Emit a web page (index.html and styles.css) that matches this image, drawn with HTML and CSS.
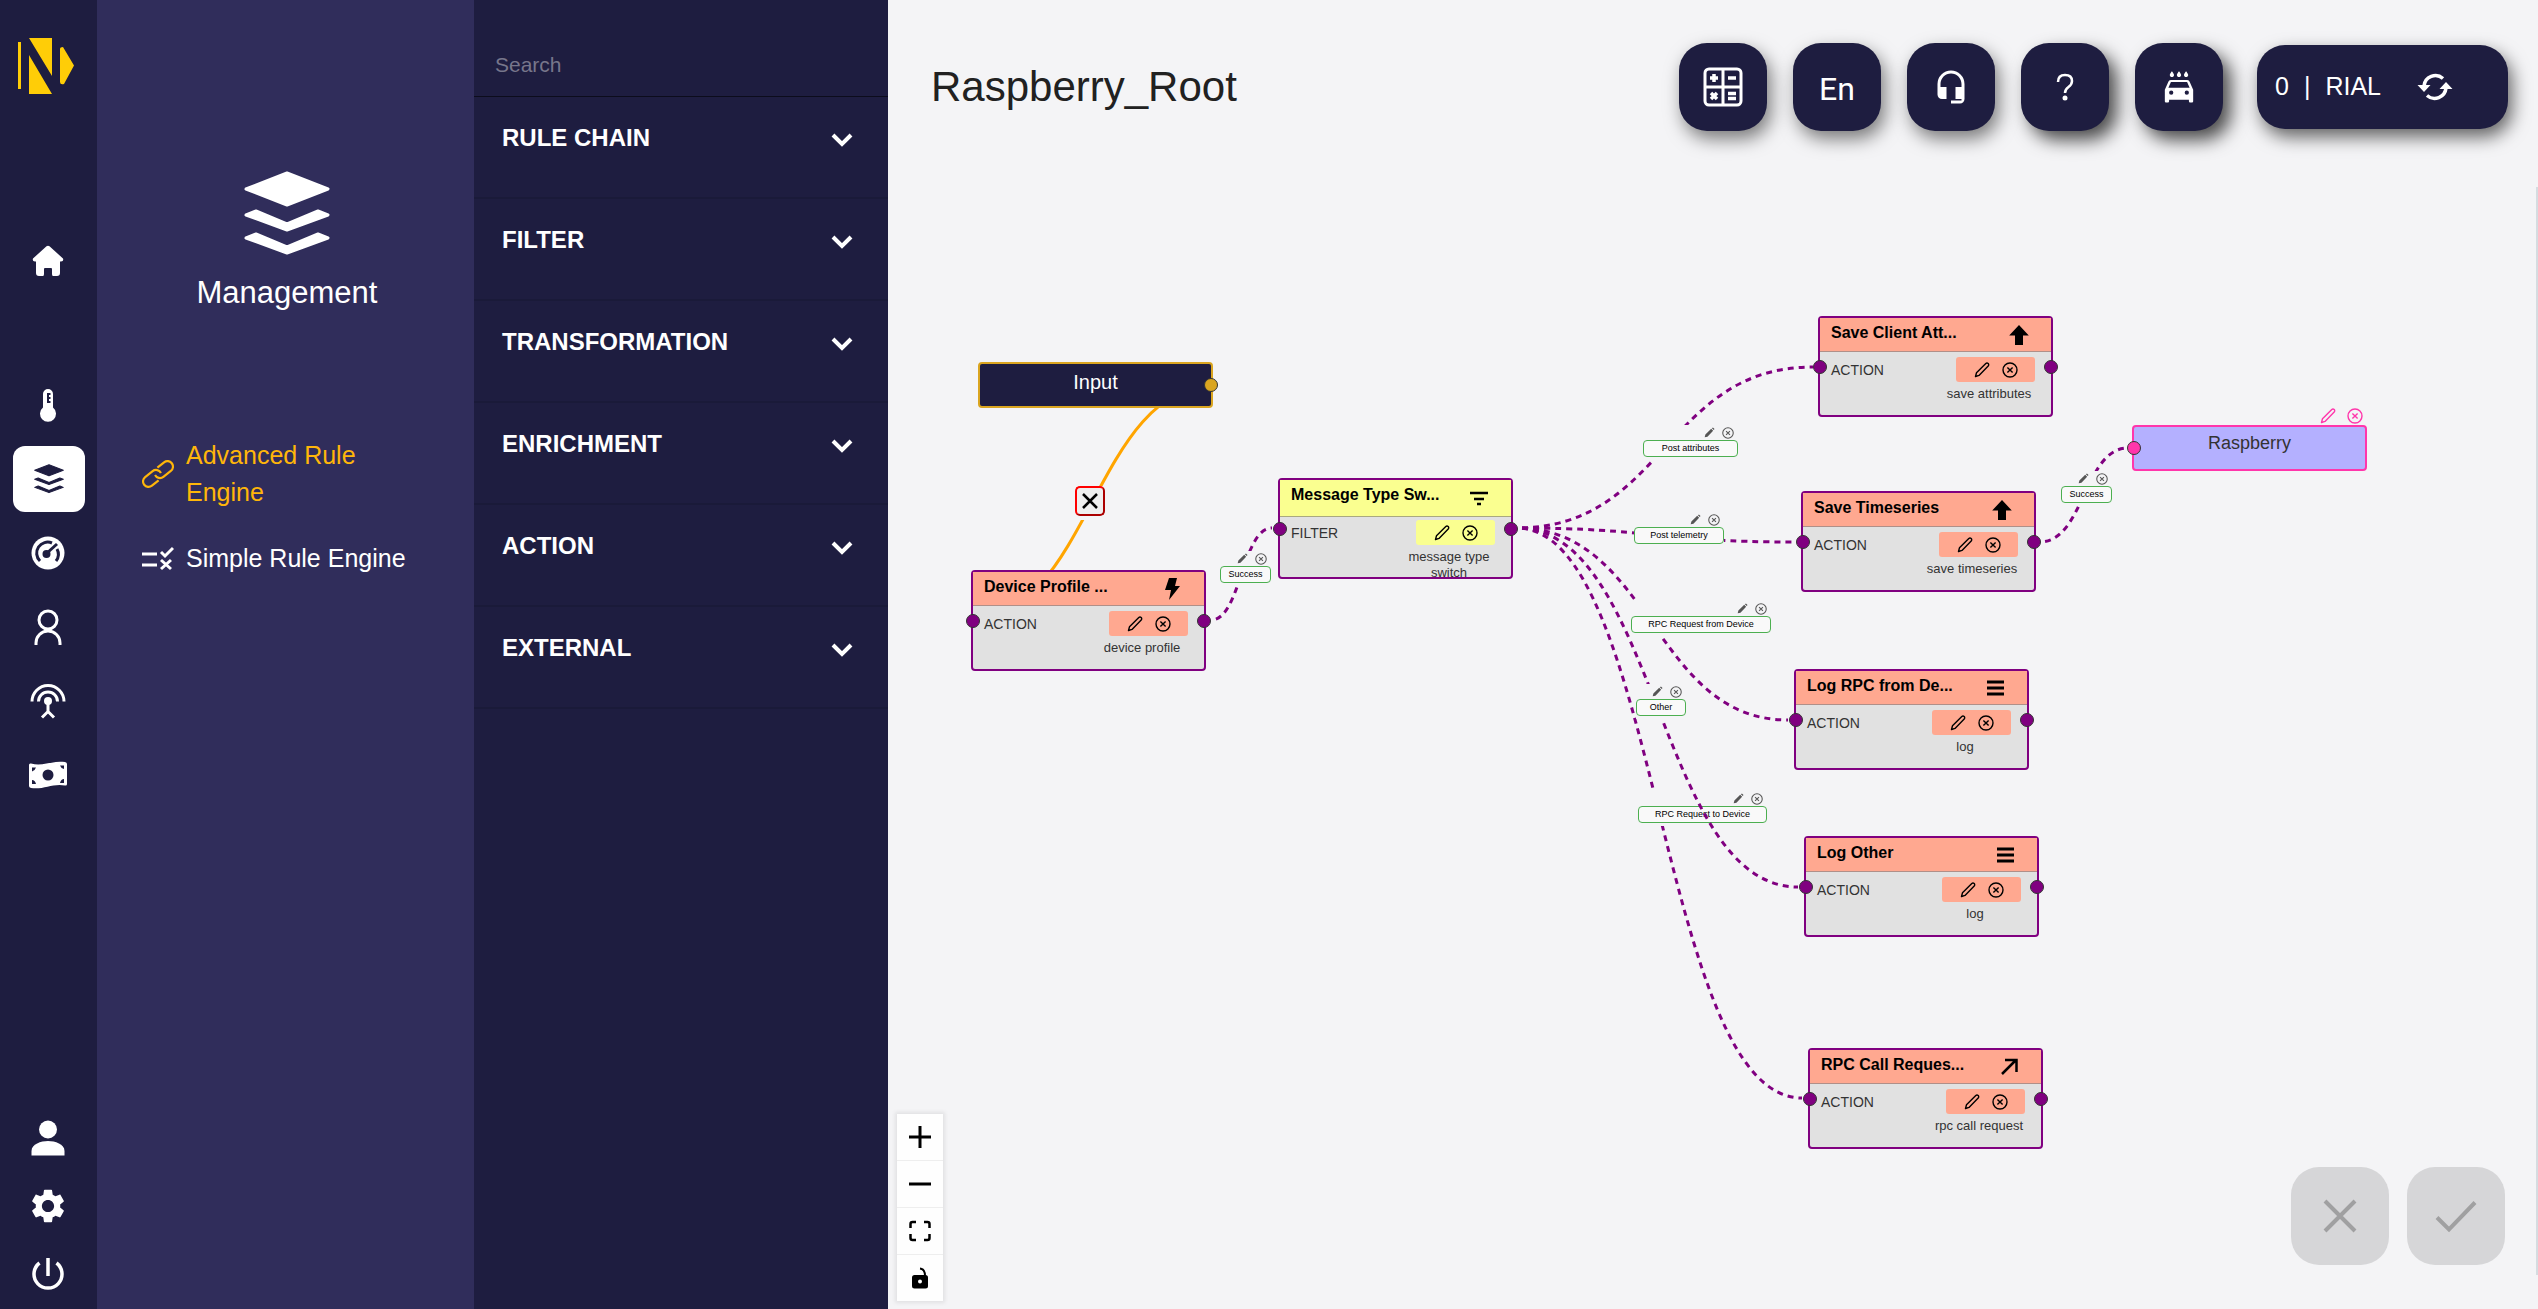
FILE: index.html
```html
<!DOCTYPE html>
<html lang="en">
<head>
<meta charset="utf-8">
<title>Raspberry_Root</title>
<link rel="stylesheet" href="styles.css">
</head>
<body>
<svg class="sprite" aria-hidden="true">
  <symbol id="layers" viewBox="0 0 86 86"><g fill="currentColor" stroke="currentColor" stroke-width="3" stroke-linejoin="round"><path d="M43 2 84 18 43 34 2 18z"/><path d="M2 36 12 32 43 45 74 32 84 36 43 51z" transform="translate(0 8)"/><path d="M2 36 12 32 43 45 74 32 84 36 43 51z" transform="translate(0 31)"/></g></symbol>
  <symbol id="pencil" viewBox="0 0 16 16"><path d="M1.500 14.500 2.500 10.800 11.800 1.600a1.500 1.500 0 0 1 2.400 2.400L5 13.400z" fill="none" stroke="currentColor" stroke-width="1.400" stroke-linejoin="round"/></symbol>
  <symbol id="pencil-solid" viewBox="0 0 16 16"><path d="M1 15 2 11 10.500 2.700 13.300 5.500 5 14zM11.500 1.800 13 .7 15.300 3 14.200 4.500z" fill="currentColor"/></symbol>
  <symbol id="remove" viewBox="0 0 16 16"><g fill="none" stroke="currentColor" stroke-width="1.400"><circle cx="8" cy="8" r="7"/><path d="M5.400 5.400l5.200 5.200M10.600 5.400l-5.200 5.200"/></g></symbol>
  <symbol id="arrow-up" viewBox="0 0 20 22"><path d="M10 1 19.800 11.500H14V21H6v-9.500H.2z" fill="currentColor"/></symbol>
  <symbol id="menu" viewBox="0 0 20 22"><path d="M2 5h17M2 11h17M2 17h17" stroke="currentColor" stroke-width="3"/></symbol>
  <symbol id="chevron" viewBox="0 0 22 14"><path d="M2 2l9 9 9-9" fill="none" stroke="currentColor" stroke-width="4"/></symbol>
</svg>

<nav class="rail" aria-label="Main">
  <a class="logo" href="#" aria-label="Home page"><svg viewBox="0 0 56 56" width="56" height="56" fill="#ffcd07"><path d="M0 4h3v47H0zM11 0h23v38zM11 17l23 39H11zM42 11q0-2 3-2l11 18.500L46 46q-4 1-4-2z"/></svg></a>
  <a class="rail-item" href="#" aria-label="Home"><svg viewBox="0 0 32 32" width="32" height="32" fill="currentColor"><path d="M14.500 1.300q1.500-1 3 0L31 13.500q1 3-2 3h-1V28q0 3-3 3h-4q-1 0-1-2v-5q0-1-1-1h-6q-1 0-1 1v5q0 2-1 2H7q-3 0-3-3V16.500H3q-3 0-2-3z"/></svg></a>
  <div class="rail-group">
    <a class="rail-item" href="#" aria-label="Sensors"><svg viewBox="0 0 18 34" width="18" height="34"><path d="M9 1a5 5 0 0 0-5 5v13.500a8 8 0 1 0 10 0V6a5 5 0 0 0-5-5z" fill="currentColor"/><path d="M9 5v10M9 6h2.500M9 10h2.500M9 14h2.500" stroke="#1e1d40" stroke-width="2"/></svg></a>
    <a class="rail-item active" href="#" aria-label="Management"><svg width="30" height="30"><use href="#layers"/></svg></a>
    <a class="rail-item" href="#" aria-label="Dashboard"><svg viewBox="0 0 34 34" width="34" height="34" fill="none"><circle cx="17" cy="17" r="16.500" fill="currentColor"/><path d="M9 25a11 11 0 0 1 12-18M26 13a11 11 0 0 1-1 12" stroke="#1e1d40" stroke-width="3"/><path d="M26 8 16 17" stroke="#1e1d40" stroke-width="3"/><circle cx="15.500" cy="18" r="4" fill="#1e1d40"/></svg></a>
    <a class="rail-item" href="#" aria-label="Customers"><svg viewBox="0 0 28 36" width="28" height="36" fill="none" stroke="currentColor" stroke-width="3"><circle cx="14" cy="11" r="9"/><path d="M2 36V34a12 12 0 0 1 24 0v2"/></svg></a>
    <a class="rail-item" href="#" aria-label="Gateways"><svg viewBox="0 0 36 36" width="36" height="36" fill="none" stroke="currentColor" stroke-width="3"><path d="M2 18.500a16 16 0 0 1 32 0M8.500 18.500a9.500 9.500 0 0 1 19 0"/><circle cx="18" cy="18" r="4" fill="currentColor" stroke="none"/><path d="M18 18v11M12 34.500l6-6 6 6"/></svg></a>
    <a class="rail-item" href="#" aria-label="Billing"><svg viewBox="0 0 40 28" width="40" height="28"><path d="M1 4q0-2 2-1.500C15 6 24-1 37 1q2 .5 2 2v20q0 2-2 1.500C25 22 15 29 3 27q-2-.5-2-2z" fill="currentColor"/><g fill="#1e1d40"><circle cx="20" cy="14" r="5.500"/><path d="M4 6.500h4q-1 3-4 4zM4 23v-4q3 0 4 4zM36 4.500h-4q1 3 4 3.500zM36 22v-4q-3 0-4 4z"/></g></svg></a>
  </div>
  <div class="rail-foot">
    <a class="rail-item" href="#" aria-label="Profile"><svg viewBox="0 0 34 36" width="34" height="36" fill="currentColor"><circle cx="17" cy="9.500" r="9"/><path d="M.5 35.500V31C.5 24 10 21 17 21s16.500 3 16.500 10v4.500z"/></svg></a>
    <a class="rail-item" href="#" aria-label="Settings"><svg viewBox="2 2 20 20" width="34" height="34" fill="currentColor"><path d="M19.140 12.940c.04-.3.06-.61.06-.94 0-.32-.02-.64-.07-.94l2.030-1.580c.18-.14.23-.41.12-.61l-1.920-3.320c-.12-.22-.37-.29-.59-.22l-2.390.96c-.5-.38-1.030-.7-1.620-.94l-.36-2.540c-.04-.24-.24-.41-.48-.41h-3.840c-.24 0-.43.17-.47.41l-.36 2.540c-.59.24-1.130.57-1.620.94l-2.390-.96c-.22-.08-.47 0-.59.22L2.740 8.870c-.12.21-.08.47.12.61l2.030 1.580c-.05.3-.09.63-.09.94s.02.64.07.94l-2.030 1.580c-.18.14-.23.41-.12.61l1.920 3.320c.12.22.37.29.59.22l2.390-.96c.5.38 1.030.7 1.620.94l.36 2.540c.05.24.24.41.48.41h3.840c.24 0 .44-.17.47-.41l.36-2.540c.59-.24 1.130-.56 1.620-.94l2.390.96c.22.08.47 0 .59-.22l1.920-3.320c.12-.22.07-.47-.12-.61l-2.010-1.580zM12 15.600c-1.980 0-3.600-1.620-3.600-3.600s1.620-3.600 3.600-3.600 3.600 1.620 3.600 3.600-1.620 3.600-3.600 3.600z"/></svg></a>
    <a class="rail-item" href="#" aria-label="Log out"><svg viewBox="0 0 32 34" width="32" height="34" fill="none" stroke="currentColor" stroke-width="3.500"><path d="M16 1v18M7.500 6a14 14 0 1 0 17 0"/></svg></a>
  </div>
</nav>

<aside class="section-menu">
  <svg width="86" height="86"><use href="#layers"/></svg>
  <h2>Management</h2>
  <nav class="section-links" aria-label="Management">
    <a class="current" href="#"><svg viewBox="0 0 32 32" width="32" height="32" fill="none" stroke="currentColor" stroke-width="2.200"><g transform="rotate(-38 16 16)"><path d="M12.500 21.500H4a5.500 5.500 0 0 1 0-11h9.500a5.500 5.500 0 0 1 5.500 6.500"/><path d="M19.500 10.500H28a5.500 5.500 0 0 1 0 11h-9.500a5.500 5.500 0 0 1-5.500-6.500"/></g></svg><span>Advanced Rule Engine</span></a>
    <a href="#"><svg viewBox="0 0 32 32" width="32" height="32" fill="none" stroke="currentColor" stroke-width="3"><path d="M0 11h15M0 22h15M19 9l4 4 8-8M19 17l10 9M29 17l-10 9"/></svg><span>Simple Rule Engine</span></a>
  </nav>
</aside>

<aside class="palette">
  <input class="search" type="search" placeholder="Search" aria-label="Search">
  <button type="button">RULE CHAIN<svg width="22" height="14"><use href="#chevron"/></svg></button>
  <button type="button">FILTER<svg width="22" height="14"><use href="#chevron"/></svg></button>
  <button type="button">TRANSFORMATION<svg width="22" height="14"><use href="#chevron"/></svg></button>
  <button type="button">ENRICHMENT<svg width="22" height="14"><use href="#chevron"/></svg></button>
  <button type="button">ACTION<svg width="22" height="14"><use href="#chevron"/></svg></button>
  <button type="button">EXTERNAL<svg width="22" height="14"><use href="#chevron"/></svg></button>
</aside>

<main class="workspace">
  <header class="topbar">
    <h1>Raspberry_Root</h1>
    <button class="tile" type="button" aria-label="Calculator"><svg viewBox="0 0 40 40" width="40" height="40" fill="none" stroke="currentColor" stroke-width="3"><rect x="2" y="2" width="36" height="36" rx="4"/><path d="M20 2v36M2 20h36"/><path d="M11 7v8M7 11h8M25 11h8M25 26.500h8M25 31.500h8M8 26l6 6M14 26l-6 6" stroke-width="3.500"/></svg></button>
    <button class="tile lang" type="button">En</button>
    <button class="tile" type="button" aria-label="Support"><svg viewBox="0 0 24 24" width="36" height="36" fill="currentColor"><path d="M12 1a9 9 0 0 0-9 9v7c0 1.660 1.340 3 3 3h3v-8H5v-2c0-3.870 3.130-7 7-7s7 3.130 7 7v2h-4v8h4v1h-7v2h6c1.660 0 3-1.340 3-3V10a9 9 0 0 0-9-9z"/></svg></button>
    <button class="tile strong" type="button" aria-label="Help"><svg viewBox="0 0 18 28" width="18" height="28" fill="none" stroke="currentColor" stroke-width="2.500"><path d="M2 9Q2 2 9 2t7 6q0 3.500-3.500 6T9 20"/><circle cx="9" cy="25" r="2.500" fill="currentColor" stroke="none"/></svg></button>
    <button class="tile strong" type="button" aria-label="Car wash"><svg viewBox="0 0 24 24" width="34" height="34" fill="currentColor"><path d="M17 5c.83 0 1.500-.67 1.500-1.500 0-1-1.500-2.700-1.500-2.700s-1.500 1.700-1.500 2.700c0 .83.67 1.500 1.500 1.500zm-5 0c.83 0 1.500-.67 1.500-1.500 0-1-1.500-2.700-1.500-2.700s-1.500 1.700-1.500 2.700c0 .83.67 1.500 1.500 1.500zM7 5c.83 0 1.500-.67 1.500-1.500C8.500 2.500 7 .8 7 .8S5.500 2.500 5.500 3.500C5.500 4.330 6.170 5 7 5z"/><path d="M19.500 8.300C19.300 7.600 18.600 7 17.800 7H6.200c-.8 0-1.500.6-1.700 1.300L2 14v8c0 .55.45 1 1 1h1c.55 0 1-.45 1-1v-1h14v1c0 .55.45 1 1 1h1c.55 0 1-.45 1-1v-8zM6.500 17.500a1.500 1.500 0 1 1 0-3 1.500 1.500 0 0 1 0 3zm11 0a1.500 1.500 0 1 1 0-3 1.500 1.500 0 0 1 0 3zM4.500 12.500l1.800-4h11.400l1.800 4z"/></svg></button>
    <div class="balance"><span>0</span><span>|</span><span>RIAL</span><button type="button" aria-label="Refresh balance"><svg viewBox="0 0 36 28" width="36" height="28" fill="none" stroke="currentColor" stroke-width="3.500"><path d="M26 5.500A11.500 11.500 0 0 0 7 13M10 22.500A11.500 11.500 0 0 0 29 15"/><path d="M.5 12h13L7 19zM22.500 16h13L29 9z" fill="currentColor" stroke="none"/></svg></button></div>
  </header>

  <section class="canvas" aria-label="Rule chain diagram">
    <svg class="edges">
      <path class="edge-root" d="M329 235C204 235 204 470 79 470"/>
      <foreignObject x="187" y="336" width="30" height="34"><div class="cut"><button type="button" aria-label="Remove link"><svg viewBox="0 0 18 18" width="18" height="18"><path d="M2 2l14 14M16 2 2 16" stroke="#000" stroke-width="2.500"/></svg></button></div></foreignObject>

      <path class="edge" d="M323 470C353 470 354 378 384 378"/>
      <foreignObject x="332" y="401" width="51" height="35"><div class="label"><span class="tools"><svg width="11" height="11"><use href="#pencil-solid"/></svg><svg width="12" height="12"><use href="#remove"/></svg></span><span class="text">Success</span></div></foreignObject>

      <path class="edge" d="M629 378C777 378 777 217 925 217"/>
      <foreignObject x="755" y="275" width="95" height="35"><div class="label"><span class="tools"><svg width="11" height="11"><use href="#pencil-solid"/></svg><svg width="12" height="12"><use href="#remove"/></svg></span><span class="text">Post attributes</span></div></foreignObject>

      <path class="edge" d="M629 378C768 378 768 392 907 392"/>
      <foreignObject x="746" y="362" width="90" height="35"><div class="label"><span class="tools"><svg width="11" height="11"><use href="#pencil-solid"/></svg><svg width="12" height="12"><use href="#remove"/></svg></span><span class="text">Post telemetry</span></div></foreignObject>

      <path class="edge" d="M629 378C764 378 765 570 900 570"/>
      <foreignObject x="743" y="451" width="140" height="35"><div class="label"><span class="tools"><svg width="11" height="11"><use href="#pencil-solid"/></svg><svg width="12" height="12"><use href="#remove"/></svg></span><span class="text">RPC Request from Device</span></div></foreignObject>

      <path class="edge" d="M629 378C771 378 771 948 914 948"/>
      <foreignObject x="750" y="641" width="129" height="35"><div class="label"><span class="tools"><svg width="11" height="11"><use href="#pencil-solid"/></svg><svg width="12" height="12"><use href="#remove"/></svg></span><span class="text">RPC Request to Device</span></div></foreignObject>

      <path class="edge" d="M629 378C769 378 770 737 910 737"/>
      <foreignObject x="748" y="534" width="50" height="35"><div class="label"><span class="tools"><svg width="11" height="11"><use href="#pencil-solid"/></svg><svg width="12" height="12"><use href="#remove"/></svg></span><span class="text">Other</span></div></foreignObject>

      <path class="edge" d="M1152 392C1196 392 1196 298 1240 298"/>
      <foreignObject x="1173" y="321" width="51" height="35"><div class="label"><span class="tools"><svg width="11" height="11"><use href="#pencil-solid"/></svg><svg width="12" height="12"><use href="#remove"/></svg></span><span class="text">Success</span></div></foreignObject>
    </svg>

    <div class="node plain input" style="left:90px;top:212px">Input<i class="port out"></i></div>

    <article class="node" style="left:83px;top:420px">
      <h3><span>Device Profile ...</span><svg viewBox="0 0 20 22" width="20" height="22"><path d="M7 0h8l-2 8h5L7 22l2-10H3z"/></svg></h3>
      <div class="node-body"><span class="kind">ACTION</span><div class="detail"><div class="pill"><button type="button" aria-label="Edit"><svg width="16" height="16"><use href="#pencil"/></svg></button><button type="button" aria-label="Remove"><svg width="16" height="16"><use href="#remove"/></svg></button></div><p>device profile</p></div></div>
      <i class="port in"></i><i class="port out"></i>
    </article>

    <article class="node filter" style="left:390px;top:328px">
      <h3><span>Message Type Sw...</span><svg viewBox="0 0 20 22" width="20" height="22" stroke="#000" stroke-width="2.500"><path d="M1 6h18M5 12h10M8 17h4"/></svg></h3>
      <div class="node-body"><span class="kind">FILTER</span><div class="detail"><div class="pill"><button type="button" aria-label="Edit"><svg width="16" height="16"><use href="#pencil"/></svg></button><button type="button" aria-label="Remove"><svg width="16" height="16"><use href="#remove"/></svg></button></div><p>message type switch</p></div></div>
      <i class="port in"></i><i class="port out"></i>
    </article>

    <article class="node" style="left:930px;top:166px">
      <h3><span>Save Client Att...</span><svg width="20" height="22"><use href="#arrow-up"/></svg></h3>
      <div class="node-body"><span class="kind">ACTION</span><div class="detail"><div class="pill"><button type="button" aria-label="Edit"><svg width="16" height="16"><use href="#pencil"/></svg></button><button type="button" aria-label="Remove"><svg width="16" height="16"><use href="#remove"/></svg></button></div><p>save attributes</p></div></div>
      <i class="port in"></i><i class="port out"></i>
    </article>

    <article class="node" style="left:913px;top:341px">
      <h3><span>Save Timeseries</span><svg width="20" height="22"><use href="#arrow-up"/></svg></h3>
      <div class="node-body"><span class="kind">ACTION</span><div class="detail"><div class="pill"><button type="button" aria-label="Edit"><svg width="16" height="16"><use href="#pencil"/></svg></button><button type="button" aria-label="Remove"><svg width="16" height="16"><use href="#remove"/></svg></button></div><p>save timeseries</p></div></div>
      <i class="port in"></i><i class="port out"></i>
    </article>

    <article class="node" style="left:906px;top:519px">
      <h3><span>Log RPC from De...</span><svg width="20" height="22"><use href="#menu"/></svg></h3>
      <div class="node-body"><span class="kind">ACTION</span><div class="detail"><div class="pill"><button type="button" aria-label="Edit"><svg width="16" height="16"><use href="#pencil"/></svg></button><button type="button" aria-label="Remove"><svg width="16" height="16"><use href="#remove"/></svg></button></div><p>log</p></div></div>
      <i class="port in"></i><i class="port out"></i>
    </article>

    <article class="node" style="left:916px;top:686px">
      <h3><span>Log Other</span><svg width="20" height="22"><use href="#menu"/></svg></h3>
      <div class="node-body"><span class="kind">ACTION</span><div class="detail"><div class="pill"><button type="button" aria-label="Edit"><svg width="16" height="16"><use href="#pencil"/></svg></button><button type="button" aria-label="Remove"><svg width="16" height="16"><use href="#remove"/></svg></button></div><p>log</p></div></div>
      <i class="port in"></i><i class="port out"></i>
    </article>

    <article class="node" style="left:920px;top:898px">
      <h3><span>RPC Call Reques...</span><svg viewBox="0 0 20 22" width="20" height="22" fill="none" stroke="#000" stroke-width="2.500"><path d="M3 18 17 4M6 4h11.500v12"/></svg></h3>
      <div class="node-body"><span class="kind">ACTION</span><div class="detail"><div class="pill"><button type="button" aria-label="Edit"><svg width="16" height="16"><use href="#pencil"/></svg></button><button type="button" aria-label="Remove"><svg width="16" height="16"><use href="#remove"/></svg></button></div><p>rpc call request</p></div></div>
      <i class="port in"></i><i class="port out"></i>
    </article>

    <div class="node plain chain" style="left:1244px;top:275px">Raspberry<i class="port in"></i>
      <div class="chain-tools"><button type="button" aria-label="Edit"><svg width="16" height="16"><use href="#pencil"/></svg></button><button type="button" aria-label="Remove"><svg width="16" height="16"><use href="#remove"/></svg></button></div>
    </div>

    <div class="zoom-controls">
      <button type="button" aria-label="Zoom in"><svg viewBox="0 0 22 22" width="22" height="22" stroke="#000" stroke-width="3"><path d="M11 0v22M0 11h22"/></svg></button>
      <button type="button" aria-label="Zoom out"><svg viewBox="0 0 22 22" width="22" height="22" stroke="#000" stroke-width="3"><path d="M0 11h22"/></svg></button>
      <button type="button" aria-label="Fit view"><svg viewBox="0 0 22 22" width="22" height="22" fill="none" stroke="#000" stroke-width="2.500"><path d="M1.500 8V4q0-2 2-2H7M15 2h3.500q2 0 2 2v4M20.500 14v4q0 2-2 2H15M7 20H3.500q-2 0-2-2v-4"/></svg></button>
      <button type="button" aria-label="Toggle interactivity"><svg viewBox="0 0 18 22" width="18" height="22"><rect x="1" y="8" width="16" height="13.500" rx="2.500"/><path d="M9 1.500q5 .5 5 7.500" fill="none" stroke="#000" stroke-width="2"/><circle cx="9" cy="14.500" r="2" fill="#fff"/></svg></button>
    </div>

    <div class="confirm">
      <button type="button" disabled aria-label="Cancel"><svg viewBox="0 0 34 34" width="34" height="34"><path d="M2 2l30 30M32 2 2 32" stroke="currentColor" stroke-width="4"/></svg></button>
      <button type="button" disabled aria-label="Apply"><svg viewBox="0 0 42 34" width="42" height="34" fill="none"><path d="M2 18.500l12 12L40 3.500" stroke="currentColor" stroke-width="4"/></svg></button>
    </div>
    <div class="drawer-edge"></div>
  </section>
</main>
</body>
</html>
```
FILE: styles.css
```css
:root {
  --navy: #1e1d40;
  --indigo: #302d5b;
  --page: #f4f4f6;
  --purple: #800080;
  --salmon: #ffa890;
}

* { box-sizing: border-box; }

body {
  margin: 0;
  min-height: 100vh;
  display: flex;
  background: var(--page);
  font-family: "Liberation Sans", Arial, sans-serif;
  color: #212121;
}

h1, h2, h3, p { margin: 0; font-weight: 400; }
a { color: inherit; text-decoration: none; }
button { border: 0; padding: 0; background: none; color: inherit; font: inherit; }
svg { display: block; flex: none; }
.sprite { position: absolute; width: 0; height: 0; }

/* Icon rail */
.rail {
  flex: none;
  width: 97px;
  padding: 38px 12px 2px 13px;
  display: flex;
  flex-direction: column;
  background: var(--navy);
  color: #fff;
}
.logo { margin: 0 0 134px 5px; }
.rail-item {
  width: 72px;
  height: 66px;
  padding-right: 3px;
  display: flex;
  align-items: center;
  justify-content: center;
  border-radius: 12px;
}
.rail-item.active { padding-right: 1px; background: #fff; color: var(--navy); }
.rail-group { margin-top: 78px; display: grid; gap: 8px; }
.rail-foot { margin-top: auto; display: grid; gap: 2px; }

/* Section menu */
.section-menu {
  flex: none;
  width: 377px;
  padding: 171px 0 0 3px;
  display: flex;
  flex-direction: column;
  align-items: center;
  background: var(--indigo);
  color: #fff;
}
.section-menu h2 { margin-top: 18px; font-size: 31px; line-height: 36px; }
.section-links {
  align-self: stretch;
  margin-top: 126px;
  padding: 0 60px 0 42px;
  display: grid;
  gap: 29px;
  font-size: 25px;
  line-height: 37px;
}
.section-links a { display: flex; align-items: center; gap: 12px; }
.section-links .current { color: #ffb60a; }

/* Node palette */
.palette {
  flex: none;
  width: 414px;
  display: flex;
  flex-direction: column;
  background: var(--navy);
  color: #fff;
}
.search {
  margin-top: 34px;
  height: 63px;
  padding: 0 21px;
  border: 0;
  border-bottom: 1px solid #0c0c1c;
  background: none;
  color: #fff;
  font: 21px "Liberation Sans", Arial, sans-serif;
}
.search::placeholder { color: #77768b; }
.palette button {
  height: 102px;
  padding: 27px 35px 0 28px;
  display: flex;
  align-items: flex-start;
  justify-content: space-between;
  border-bottom: 2px solid #1a1a39;
  font-size: 24px;
  font-weight: 700;
  line-height: 28px;
}
.palette button svg { margin-top: 9px; }

/* Top bar */
.workspace { flex: 1; min-width: 0; display: flex; flex-direction: column; }
.topbar {
  height: 150px;
  padding: 43px 30px 19px 43px;
  display: flex;
  align-items: center;
  gap: 26px;
}
.topbar h1 { margin-right: auto; font-size: 42px; line-height: 48px; }
.tile {
  width: 88px;
  height: 88px;
  display: grid;
  place-items: center;
  border-radius: 28px;
  background: var(--navy);
  color: #fff;
  box-shadow: 4px 8px 18px rgba(0, 0, 0, .5);
}
.tile.strong { box-shadow: 8px 9px 18px rgba(0, 0, 0, .7); }
.lang { padding-top: 3px; font: 32px Roboto, sans-serif; }
.balance {
  margin-left: 8px;
  width: 251px;
  height: 84px;
  padding: 0 18px 2px;
  display: flex;
  align-items: center;
  gap: 15px;
  border-radius: 28px;
  background: var(--navy);
  color: #fff;
  font-size: 25px;
  box-shadow: 4px 8px 18px rgba(0, 0, 0, .6);
}
.balance button { margin-left: 21px; padding-top: 2px; }

/* Diagram */
.canvas { position: relative; flex: 1; overflow: hidden; }
.edges { position: absolute; inset: 0; width: 100%; height: 100%; }
.edge { fill: none; stroke: var(--purple); stroke-width: 3; stroke-dasharray: 6 5; stroke-dashoffset: 6; }
.edge-root { fill: none; stroke: orange; stroke-width: 3; }
.cut { height: 34px; background: var(--page); }
.cut button {
  width: 30px;
  height: 30px;
  display: grid;
  place-items: center;
  border: 2px outset red;
  border-radius: 5px;
  background: #efefef;
}
.label {
  height: 35px;
  display: flex;
  flex-direction: column;
  background: var(--page);
}
.tools { height: 15px; padding-right: 4px; display: flex; justify-content: flex-end; align-items: center; gap: 7px; color: #555; }
.label .text {
  height: 17px;
  border: 1px solid #4caf50;
  border-radius: 4px;
  background: #f9f9f9;
  color: #000;
  font-size: 9px;
  line-height: 14px;
  text-align: center;
  white-space: nowrap;
}

.node {
  position: absolute;
  width: 235px;
  height: 101px;
  border: 2px solid var(--purple);
  border-radius: 4px;
  background: #e1e1e1;
}
.node h3 {
  height: 34px;
  padding: 0 22px 0 11px;
  display: flex;
  align-items: center;
  justify-content: space-between;
  border-bottom: 1px solid #b08f88;
  background: var(--salmon);
  color: #000;
  font-size: 16px;
  font-weight: 700;
  line-height: 30px;
}
.node h3 span { align-self: flex-start; }
.node-body { padding: 5px 15px 0 11px; display: flex; justify-content: space-between; }
.kind { padding-top: 5px; color: #333; font-size: 14px; line-height: 16px; }
.detail { width: 94px; display: flex; flex-direction: column; align-items: flex-end; }
.pill {
  width: 79px;
  height: 25px;
  margin-right: 1px;
  display: flex;
  align-items: center;
  justify-content: center;
  gap: 12px;
  border-radius: 3px;
  background: var(--salmon);
  color: #000;
}
.detail p { width: 94px; padding-top: 4px; color: #333; font-size: 13px; line-height: 16px; text-align: center; }
.filter h3 { height: 37px; border-color: #a9a97f; background: #faff90; }
.filter .node-body { padding-top: 3px; }
.filter .pill { background: #faff90; }

.port {
  position: absolute;
  top: 42px;
  width: 14px;
  height: 14px;
  border: 1px solid #333;
  border-radius: 50%;
  background: var(--purple);
}
.port.in { left: -7px; }
.port.out { right: -7px; }

.plain { height: 46px; text-align: center; }
.plain .port { top: 14px; }
.input { border-color: #daa520; background: var(--navy); color: #fff; font-size: 20px; line-height: 36px; }
.input .port { background: #daa520; }
.chain { border-color: #ff36ab; background: #b4b0ff; color: #333; font-size: 18px; line-height: 32px; }
.chain .port { background: #ff36ab; }
.chain-tools { position: absolute; right: 2px; top: -19px; display: flex; gap: 11px; color: #ff36ab; }

.zoom-controls {
  position: absolute;
  left: 9px;
  bottom: 8px;
  width: 46px;
  display: grid;
  box-shadow: 0 0 4px 2px rgba(0, 0, 0, .08);
}
.zoom-controls button {
  height: 47px;
  display: grid;
  place-items: center;
  border-bottom: 1px solid #eee;
  background: #fefefe;
}
.zoom-controls button:last-child { height: 46px; border-bottom: 0; }

.confirm { position: absolute; right: 33px; bottom: 44px; display: flex; gap: 18px; }
.confirm button {
  width: 98px;
  height: 98px;
  display: grid;
  place-items: center;
  border-radius: 28px;
  background: #d6d6d8;
  color: #a0a0a1;
}
.drawer-edge { position: absolute; right: 0; top: 37px; bottom: 34px; width: 2px; background: #d5dce0; }
```
